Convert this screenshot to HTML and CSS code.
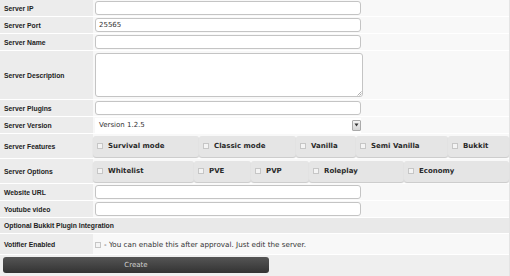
FILE: index.html
```html
<!DOCTYPE html>
<html>
<head>
<meta charset="utf-8">
<link rel="stylesheet" href="styles.css">
</head>
<body>
<div class="form">
  <div class="row"><div class="label">Server IP</div><div class="value"><div class="input"></div></div></div>
  <div class="row"><div class="label">Server Port</div><div class="value"><div class="input">25565</div></div></div>
  <div class="row"><div class="label">Server Name</div><div class="value"><div class="input"></div></div></div>
  <div class="row tall"><div class="label">Server Description</div><div class="value"><div class="textarea"><svg class="grip" width="5" height="5" viewBox="0 0 5 5"><path d="M4.5 0.5 L0.5 4.5 M4.5 2.5 L2.5 4.5" stroke="#999" stroke-width="0.8"/></svg></div></div></div>
  <div class="row"><div class="label">Server Plugins</div><div class="value"><div class="input"></div></div></div>
  <div class="row"><div class="label">Server Version</div><div class="value"><div class="select"><span>Version 1.2.5</span><span class="arrow"><svg width="5" height="4" viewBox="0 0 5 4"><path d="M0.5 0.5 H4.5 L2.5 3.5 Z" fill="#333"/></svg></span></div></div></div>
  <div class="row check-row"><div class="label">Server Features</div><div class="value">
    <div class="checks">
      <label class="chk" style="width:106px"><span class="box"></span>Survival mode</label>
      <label class="chk" style="width:97px"><span class="box"></span>Classic mode</label>
      <label class="chk" style="width:60px"><span class="box"></span>Vanilla</label>
      <label class="chk" style="width:92px"><span class="box"></span>Semi Vanilla</label>
      <label class="chk grow"><span class="box"></span>Bukkit</label>
    </div>
  </div></div>
  <div class="row check-row"><div class="label">Server Options</div><div class="value">
    <div class="checks">
      <label class="chk" style="width:101px"><span class="box"></span>Whitelist</label>
      <label class="chk" style="width:57px"><span class="box"></span>PVE</label>
      <label class="chk" style="width:58px"><span class="box"></span>PVP</label>
      <label class="chk" style="width:95px"><span class="box"></span>Roleplay</label>
      <label class="chk grow"><span class="box"></span>Economy</label>
    </div>
  </div></div>
  <div class="row"><div class="label">Website URL</div><div class="value"><div class="input"></div></div></div>
  <div class="row"><div class="label">Youtube video</div><div class="value"><div class="input"></div></div></div>
  <div class="row header"><div class="label wide">Optional Bukkit Plugin Integration</div></div>
  <div class="row votifier"><div class="label">Votifier Enabled</div><div class="value note"><span class="box small"></span>- You can enable this after approval. Just edit the server.</div></div>
  <div class="footer"><div class="button">Create</div></div>
</div>
</body>
</html>
```
FILE: styles.css
```css
html, body {
  margin: 0;
  padding: 0;
  background: #ffffff;
}
body {
  font-family: "DejaVu Sans", Verdana, sans-serif;
  font-size: 7px;
  color: #222;
}
.form {
  width: 510px;
  height: 276px;
  background: #f3f3f3;
  box-sizing: border-box;
  border-right: 1px solid #e4e4e4;
}
.row {
  display: grid;
  grid-template-columns: 93px 1fr;
  height: 17px;
  border-bottom: 1px solid #ffffff;
  box-sizing: border-box;
}
.label {
  background: #ececec;
  font-family: "Liberation Sans", Arial, sans-serif;
  font-size: 6.8px;
  font-weight: bold;
  color: #222;
  display: flex;
  align-items: center;
  padding-left: 4px;
}
.value {
  background: #f8f8f8;
  display: flex;
  align-items: center;
  padding-left: 2px;
}
.input {
  width: 266px;
  height: 14px;
  box-sizing: border-box;
  background: #fff;
  border: 1px solid #c4c4c4;
  border-radius: 3px;
  padding-left: 3px;
  display: flex;
  align-items: center;
  color: #333;
}
.tall { height: 49px; }
.textarea {
  width: 268px;
  height: 44px;
  box-sizing: border-box;
  background: #fff;
  border: 1px solid #c4c4c4;
  border-radius: 3px;
  position: relative;
}
.grip { position: absolute; right: 0; bottom: 0; }
.select {
  width: 266px;
  height: 15px;
  box-sizing: border-box;
  background: #fff;
  display: flex;
  align-items: center;
  justify-content: space-between;
  padding-left: 4px;
  color: #333;
}
.arrow {
  width: 9px;
  height: 11px;
  box-sizing: border-box;
  background: linear-gradient(#f4f4f4, #d4d4d4);
  border: 1px solid #aaa;
  border-radius: 1px;
  display: flex;
  align-items: center;
  justify-content: center;
}
.check-row { height: 25px; }
.check-row .value { padding-left: 0; }
.checks {
  display: flex;
  width: 100%;
  height: 21px;
}
.chk {
  display: flex;
  align-items: center;
  box-sizing: border-box;
  background: #e5e5e5;
  border-radius: 3px;
  box-shadow: 0 1px 1px #c8c8c8;
  padding-left: 4px;
  font-weight: bold;
  color: #2a2a2a;
}
.chk.grow { flex: 1; }
.box {
  width: 6px;
  height: 6px;
  box-sizing: border-box;
  border: 1px solid #c6c6c6;
  background: #f4f4f4;
  margin-right: 5px;
  flex: none;
}
.box.small { margin-right: 3px; margin-top: 2px; }
.header {
  display: flex;
  height: 16px;
}
.label.wide {
  flex: 1;
  background: #e9e9e9;
}
.votifier { height: 21px; }
.note { color: #333; font-size: 7.2px; }
.footer {
  background: #efefef;
  height: 21px;
  padding: 2px 0 0 3px;
  box-sizing: border-box;
}
.button {
  width: 266px;
  height: 16px;
  border-radius: 3px;
  background: linear-gradient(#555555, #333333);
  color: #cfcfcf;
  display: flex;
  align-items: center;
  justify-content: center;
}
```
